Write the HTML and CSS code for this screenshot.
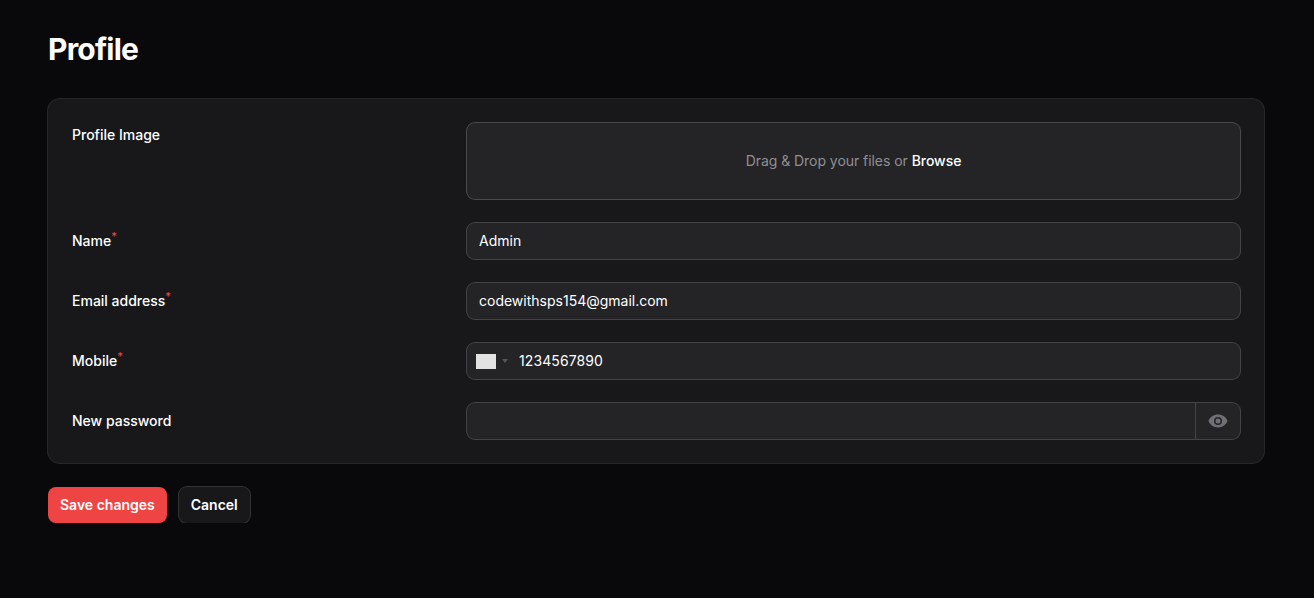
FILE: index.html
```html
<!DOCTYPE html>
<html lang="en">
<head>
  <meta charset="UTF-8" />
  <title>Profile</title>
  <link rel="stylesheet" href="styles.css">
</head>
<body>
  <main class="page">
    <h1 class="page-title">Profile</h1>

    <form class="card">
      <div class="field field-top">
        <label class="field-label">Profile Image</label>
        <div class="dropzone">
          <span>Drag &amp; Drop your files or <span class="browse">Browse</span></span>
        </div>
      </div>

      <div class="field">
        <label class="field-label">Name<sup class="req">*</sup></label>
        <div class="input-wrap"><input class="text-input" type="text" value="Admin"></div>
      </div>

      <div class="field">
        <label class="field-label">Email address<sup class="req">*</sup></label>
        <div class="input-wrap"><input class="text-input" type="text" value="codewithsps154@gmail.com"></div>
      </div>

      <div class="field">
        <label class="field-label">Mobile<sup class="req">*</sup></label>
        <div class="input-wrap">
          <div class="flag-select">
            <span class="flag"></span>
            <span class="caret"></span>
          </div>
          <input class="text-input phone-input" type="text" value="1234567890">
        </div>
      </div>

      <div class="field">
        <label class="field-label">New password</label>
        <div class="input-wrap">
          <input class="text-input" type="password">
          <div class="suffix">
            <svg class="eye" viewBox="0 0 20 20" fill="currentColor">
              <path d="M10 12.5a2.5 2.5 0 1 0 0-5 2.5 2.5 0 0 0 0 5Z"/>
              <path fill-rule="evenodd" clip-rule="evenodd" d="M.66 10.59a1.16 1.16 0 0 1 0-1.18C2 6.1 5.7 3.5 10 3.5s8 2.6 9.34 5.91c.16.38.16.8 0 1.18C18 13.9 14.3 16.5 10 16.5s-8-2.6-9.34-5.91ZM14 10a4 4 0 1 1-8 0 4 4 0 0 1 8 0Z"/>
            </svg>
          </div>
        </div>
      </div>
    </form>

    <div class="actions">
      <button class="btn btn-primary" type="button">Save changes</button>
      <button class="btn btn-secondary" type="button">Cancel</button>
    </div>
  </main>
</body>
</html>
```

FILE: styles.css
```css
body {
  margin: 0;
  background: #09090b;
  color: #fff;
  font-family: Inter, "Liberation Sans", sans-serif;
  font-size: 14px;
  line-height: 20px;
}

.page {
  padding: 31px 50px 0 48px;
}

.page-title {
  margin: 0 0 32px;
  font-size: 30px;
  line-height: 36px;
  font-weight: 700;
  letter-spacing: -0.8px;
}

.card {
  display: flex;
  flex-direction: column;
  gap: 24px;
  padding: 24px;
  background: #18181b;
  border-radius: 12px;
  box-shadow: 0 0 0 1px #27272a;
}

.field {
  display: grid;
  grid-template-columns: 371px 1fr;
  column-gap: 24px;
  align-items: center;
}

.field-top {
  align-items: start;
}

.field-top .field-label {
  padding-top: 2px;
}

.field-label {
  font-weight: 500;
  color: #fff;
}

.req {
  color: #e5484d;
  font-size: 11px;
  line-height: 0;
  font-weight: 500;
}

.dropzone {
  display: flex;
  align-items: center;
  justify-content: center;
  height: 76px;
  background: #242427;
  border-radius: 8px;
  box-shadow: 0 0 0 1px #4a4a4d;
  color: #8f8f93;
  letter-spacing: -0.05px;
}

.browse {
  color: #fff;
  font-weight: 500;
}

.input-wrap {
  display: flex;
  align-items: center;
  height: 36px;
  background: #242427;
  border-radius: 8px;
  box-shadow: 0 0 0 1px #434346;
}

.text-input {
  flex: 1;
  min-width: 0;
  box-sizing: border-box;
  height: 36px;
  padding: 0 12px 2px;
  border: 0;
  outline: 0;
  background: transparent;
  color: #fff;
  font: inherit;
}

.phone-input {
  padding-left: 11px;
  letter-spacing: 0.1px;
}

.flag-select {
  display: flex;
  align-items: center;
  gap: 6px;
  padding-left: 9px;
}

.flag {
  width: 20px;
  height: 15px;
  background: #e2e2e2;
}

.caret {
  width: 0;
  height: 0;
  border-left: 3px solid transparent;
  border-right: 3px solid transparent;
  border-top: 4px solid #555558;
}

.suffix {
  display: flex;
  align-items: center;
  justify-content: center;
  width: 45px;
  height: 36px;
  border-left: 1px solid #434346;
  box-sizing: border-box;
  color: #6f6f74;
}

.eye {
  width: 20px;
  height: 20px;
}

.actions {
  display: flex;
  align-items: center;
  gap: 12px;
  margin-top: 24px;
}

.btn {
  height: 36px;
  padding: 0 12px;
  border: 0;
  border-radius: 8px;
  color: #fff;
  font: inherit;
  font-weight: 600;
  cursor: pointer;
}

.btn-primary {
  background: #ef4444;
}

.btn-secondary {
  background: #18181b;
  box-shadow: 0 0 0 1px #333336;
}
```
